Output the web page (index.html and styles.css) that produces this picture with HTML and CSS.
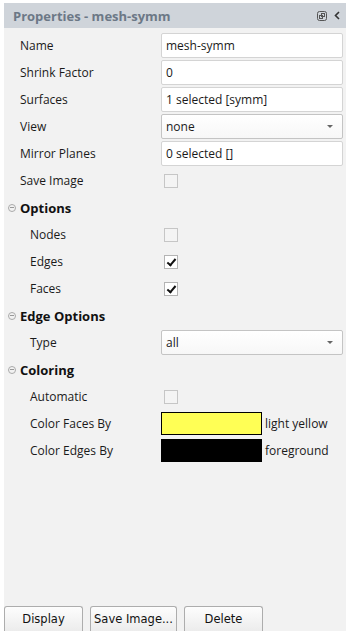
FILE: index.html
```html
<!DOCTYPE html>
<html lang="en">
<head>
    <meta charset="UTF-8">
    <title>Properties - mesh-symm</title>
    <link rel="stylesheet" href="styles.css">
</head>
<body>
    <div class="panel">
        <div class="title">
            <span class="title-text">Properties - mesh-symm</span>
            <span class="title-icons">
                <svg width="10" height="10" viewBox="0 0 10 10">
                    <rect x="0.5" y="0.5" width="9" height="9" rx="2" fill="none" stroke="#555"/>
                    <rect x="2.5" y="4.5" width="3" height="3" fill="none" stroke="#555"/>
                    <rect x="4.5" y="2.5" width="3" height="3" fill="none" stroke="#555"/>
                </svg>
                <svg width="6" height="9" viewBox="0 0 6 9">
                    <path d="M5 1 L1.5 4.5 L5 8" fill="none" stroke="#333" stroke-width="1.6"/>
                </svg>
            </span>
        </div>

        <div class="props">
            <div class="row"><span class="label">Name</span><div class="field">mesh-symm</div></div>
            <div class="row"><span class="label">Shrink Factor</span><div class="field">0</div></div>
            <div class="row"><span class="label">Surfaces</span><div class="field">1 selected [symm]</div></div>
            <div class="row"><span class="label">View</span><div class="field select">none<i class="arrow"></i></div></div>
            <div class="row"><span class="label">Mirror Planes</span><div class="field">0 selected []</div></div>
            <div class="row"><span class="label">Save Image</span><span class="check"></span></div>

            <div class="group"><i class="fold"></i>Options</div>
            <div class="row sub"><span class="label">Nodes</span><span class="check"></span></div>
            <div class="row sub"><span class="label">Edges</span><span class="check on"></span></div>
            <div class="row sub"><span class="label">Faces</span><span class="check on"></span></div>

            <div class="group"><i class="fold"></i>Edge Options</div>
            <div class="row sub"><span class="label">Type</span><div class="field select">all<i class="arrow"></i></div></div>

            <div class="group"><i class="fold"></i>Coloring</div>
            <div class="row sub"><span class="label">Automatic</span><span class="check"></span></div>
            <div class="row sub"><span class="label">Color Faces By</span><div class="color"><span class="swatch yellow"></span>light yellow</div></div>
            <div class="row sub"><span class="label">Color Edges By</span><div class="color"><span class="swatch black"></span>foreground</div></div>
        </div>

        <div class="buttons">
            <button class="btn">Display</button>
            <button class="btn wide">Save Image...</button>
            <button class="btn">Delete</button>
        </div>
    </div>
</body>
</html>
```

FILE: styles.css
```css
body {
    margin: 0;
    background: #fff;
    font: 12px "Open Sans", "Noto Sans", sans-serif;
    color: #1a1a1a;
}

.panel {
    margin: 3px 3px 0 4px;
    height: 628px;
    background: #f2f2f2;
    display: flex;
    flex-direction: column;
}

.title {
    height: 25px;
    background: #cfd4da;
    display: flex;
    align-items: center;
    justify-content: space-between;
    padding: 0 6px 0 9px;
}
.title-text {
    font: bold 13px "Open Sans", sans-serif;
    color: #6c7886;
}
.title-icons {
    display: flex;
    align-items: center;
    gap: 7px;
}

.props {
    flex: 1;
    padding-top: 4px;
}

.row {
    height: 27px;
    display: grid;
    grid-template-columns: 141px 182px;
    align-items: center;
    padding-left: 16px;
}
.row.sub {
    padding-left: 26px;
    grid-template-columns: 131px 182px;
}

.field {
    height: 23px;
    line-height: 23px;
    background: #fff;
    border: 1px solid #d4d4d4;
    border-radius: 2px;
    padding: 0 4px;
    position: relative;
}
.field.select {
    border-color: #c4c4c4;
    background: linear-gradient(#fff, #f7f7f7);
}
.arrow {
    position: absolute;
    right: 9px;
    top: 10px;
    border-left: 3px solid transparent;
    border-right: 3px solid transparent;
    border-top: 3px solid #666;
}

.check {
    width: 12px;
    height: 12px;
    margin-left: 3px;
    border: 1px solid #c6c6c6;
    background: #f4f4f4;
    position: relative;
}
.check.on {
    background: #fff;
    border-color: #b4b4b4;
}
.check.on::after {
    content: "";
    position: absolute;
    left: 4px;
    top: 1px;
    width: 3px;
    height: 7px;
    border: solid #111;
    border-width: 0 2px 2px 0;
    transform: rotate(40deg);
}

.group {
    height: 27px;
    display: flex;
    align-items: center;
    padding-left: 4px;
    font: bold 13px "Open Sans", sans-serif;
    color: #111;
}
.fold {
    width: 6px;
    height: 6px;
    border: 1px solid #aaa;
    border-radius: 50%;
    margin-right: 4px;
    position: relative;
}
.fold::after {
    content: "";
    position: absolute;
    left: 1px;
    top: 2.5px;
    width: 4px;
    height: 1px;
    background: #999;
}

.color {
    display: flex;
    align-items: center;
    white-space: nowrap;
}
.swatch {
    width: 99px;
    height: 21px;
    border: 1px solid #000;
    margin-right: 3px;
}
.swatch.yellow { background: #ffff55; }
.swatch.black { background: #000; }

.buttons {
    display: flex;
    gap: 7px;
}
.btn {
    height: 25px;
    width: 79px;
    padding: 0;
    font: 11.5px "DejaVu Sans", sans-serif;
    color: #111;
    background: linear-gradient(#fdfdfd, #ececec);
    border: 1px solid #adadad;
    border-radius: 3px 3px 0 0;
    border-bottom: none;
}
.btn.wide {
    width: 87px;
}
```
